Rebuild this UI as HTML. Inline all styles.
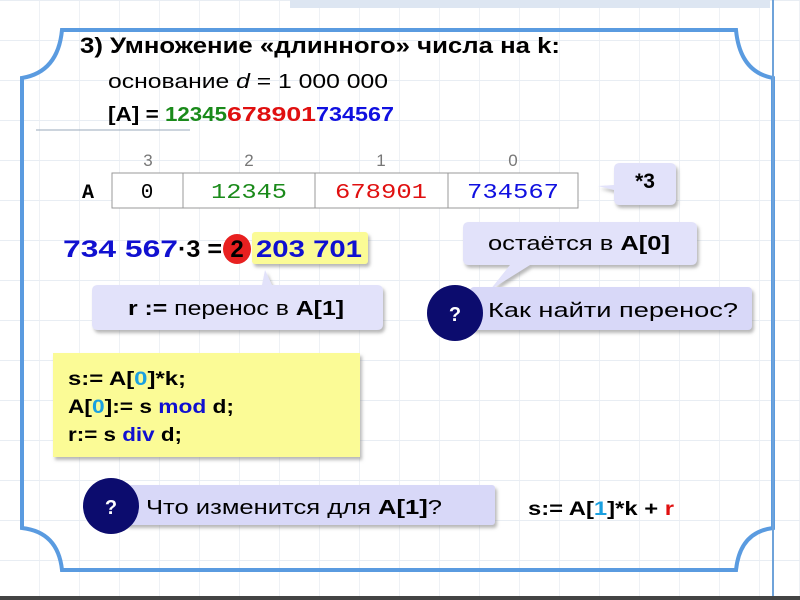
<!DOCTYPE html>
<html><head><meta charset="utf-8"><style>
html,body{margin:0;padding:0}
body{width:800px;height:600px;overflow:hidden;background:#fff;
background-image:repeating-linear-gradient(0deg,transparent 0 39px,#e8edf3 39px 40px),repeating-linear-gradient(90deg,transparent 0 39px,#eef1f5 39px 40px);}
svg{position:absolute;left:0;top:0}
text{font-family:"Liberation Sans",sans-serif}
.m{font-family:"Liberation Mono",monospace}
</style></head><body>
<svg width="800" height="600" viewBox="0 0 800 600">
<defs>
<filter id="sh" x="-10%" y="-10%" width="130%" height="140%"><feDropShadow dx="2" dy="3" stdDeviation="1.5" flood-color="#888" flood-opacity="0.6"/></filter>
</defs>
<rect x="290" y="0" width="480" height="8" fill="#dde6f2"/>
<rect x="0" y="596" width="800" height="4" fill="#444"/>
<path d="M62,30 H736 Q740,72 773,78 V528 Q740,532 736,570 H62 Q58,532 22,528 V78 Q58,72 62,30 Z" fill="none" stroke="#5a9be0" stroke-width="4"/>
<line x1="773" y1="0" x2="773" y2="596" stroke="#6fa3da" stroke-width="2"/>

<text x="80" y="53" font-size="22" font-weight="bold" textLength="480" lengthAdjust="spacingAndGlyphs">3) Умножение «длинного» числа на k:</text>
<text x="108" y="88" font-size="20" textLength="280" lengthAdjust="spacingAndGlyphs">основание <tspan font-style="italic">d</tspan> = 1 000 000</text>
<text x="108" y="121" font-size="20" font-weight="bold"><tspan textLength="57" lengthAdjust="spacingAndGlyphs">[A] = </tspan><tspan x="165" fill="#1a8a1a" textLength="62" lengthAdjust="spacingAndGlyphs">12345</tspan><tspan x="227" fill="#e01010" textLength="89" lengthAdjust="spacingAndGlyphs">678901</tspan><tspan x="316" fill="#1010e0" textLength="78" lengthAdjust="spacingAndGlyphs">734567</tspan></text>
<line x1="36" y1="130" x2="190" y2="130" stroke="#9ab" stroke-width="1"/>

<g font-size="17" fill="#777" text-anchor="middle">
<text x="148" y="166">3</text><text x="249" y="166">2</text><text x="381" y="166">1</text><text x="513" y="166">0</text></g>
<rect x="112" y="173" width="466" height="35" fill="#fff" stroke="#999"/>
<line x1="183" y1="173" x2="183" y2="208" stroke="#999"/>
<line x1="315" y1="173" x2="315" y2="208" stroke="#999"/>
<line x1="448" y1="173" x2="448" y2="208" stroke="#999"/>
<text class="m" x="88" y="198" font-size="20" font-weight="bold" text-anchor="middle">A</text>
<g font-size="21" text-anchor="middle">
<text class="m" x="147" y="198">0</text>
<text class="m" x="249" y="198" fill="#1a8a1a" textLength="76" lengthAdjust="spacingAndGlyphs">12345</text>
<text class="m" x="381" y="198" fill="#e01010" textLength="92" lengthAdjust="spacingAndGlyphs">678901</text>
<text class="m" x="513" y="198" fill="#1010e0" textLength="92" lengthAdjust="spacingAndGlyphs">734567</text></g>

<path d="M620,163 H670 Q676,163 676,169 V199 Q676,205 670,205 H620 Q614,205 614,199 V190 L598,186 L614,185 V169 Q614,163 620,163 Z" fill="#e2e2fa" filter="url(#sh)"/>
<text x="645" y="188" font-size="21" font-weight="bold" text-anchor="middle">*3</text>

<rect x="252" y="232" width="116" height="32" fill="#fbfb96" rx="3" filter="url(#sh)"/>
<text x="63" y="257" font-size="24" font-weight="bold"><tspan fill="#1010d0" textLength="115" lengthAdjust="spacingAndGlyphs">734 567</tspan><tspan x="178" textLength="44" lengthAdjust="spacingAndGlyphs">·3 =</tspan></text>
<ellipse cx="237" cy="249" rx="14" ry="15" fill="#e82020"/>
<text x="237" y="257" font-size="24" font-weight="bold" text-anchor="middle">2</text>
<text x="256" y="257" font-size="24" font-weight="bold" fill="#1010d0" textLength="106" lengthAdjust="spacingAndGlyphs">203 701</text>

<path d="M469,222 H691 Q697,222 697,228 V259 Q697,265 691,265 H530 L490,290 L510,265 H469 Q463,265 463,259 V228 Q463,222 469,222 Z" fill="#e2e2fa" filter="url(#sh)"/>
<text x="488" y="250" font-size="20" textLength="182" lengthAdjust="spacingAndGlyphs">остаётся в <tspan font-weight="bold">A[0]</tspan></text>

<path d="M98,285 H262 L265,270 L272,285 H377 Q383,285 383,291 V324 Q383,330 377,330 H98 Q92,330 92,324 V291 Q92,285 98,285 Z" fill="#e2e2fa" filter="url(#sh)"/>
<text x="128" y="315" font-size="20" textLength="216" lengthAdjust="spacingAndGlyphs"><tspan font-weight="bold">r :=</tspan> перенос в <tspan font-weight="bold">A[1]</tspan></text>

<rect x="470" y="287" width="282" height="43" rx="4" fill="#d8d8f8" filter="url(#sh)"/>
<circle cx="455" cy="313" r="28" fill="#0c0c6e"/>
<text x="455" y="321" font-size="20" font-weight="bold" fill="#fff" text-anchor="middle">?</text>
<text x="488" y="317" font-size="20" textLength="250" lengthAdjust="spacingAndGlyphs">Как найти перенос?</text>

<rect x="53" y="353" width="307" height="104" fill="#fbfb96" filter="url(#sh)"/>
<g font-size="19" font-weight="bold">
<text x="68" y="385" textLength="118" lengthAdjust="spacingAndGlyphs">s:= A[<tspan fill="#1aa0e0">0</tspan>]*k;</text>
<text x="68" y="413" textLength="166" lengthAdjust="spacingAndGlyphs">A[<tspan fill="#1aa0e0">0</tspan>]:= s <tspan fill="#1010d0">mod</tspan> d;</text>
<text x="68" y="441" textLength="114" lengthAdjust="spacingAndGlyphs">r:= s <tspan fill="#1010d0">div</tspan> d;</text>
</g>

<rect x="125" y="485" width="370" height="40" rx="3" fill="#d8d8f8" filter="url(#sh)"/>
<circle cx="111" cy="506" r="28" fill="#0c0c6e"/>
<text x="111" y="514" font-size="20" font-weight="bold" fill="#fff" text-anchor="middle">?</text>
<text x="146" y="514" font-size="20" textLength="296" lengthAdjust="spacingAndGlyphs">Что изменится для <tspan font-weight="bold">A[1]</tspan>?</text>

<text x="528" y="515" font-size="19" font-weight="bold" textLength="146" lengthAdjust="spacingAndGlyphs">s:= A[<tspan fill="#1aa0e0">1</tspan>]*k + <tspan fill="#e01010">r</tspan></text>
</svg>
</body></html>
